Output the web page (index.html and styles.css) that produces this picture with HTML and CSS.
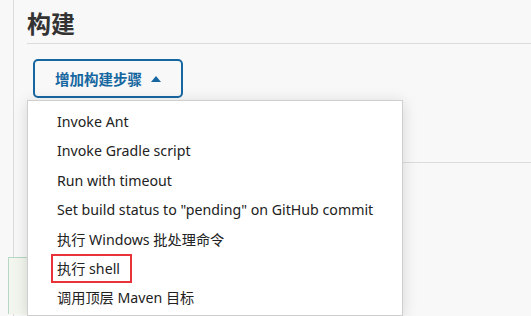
FILE: index.html
```html
<!DOCTYPE html>
<html lang="zh-CN">
<head>
    <meta charset="UTF-8">
    <meta name="viewport" content="width=device-width, initial-scale=1.0">
    <title>构建</title>
    <link rel="stylesheet" href="styles.css">
</head>
<body>
    <div class="layout">
        <div class="side-gap"></div>
        <div class="main">
            <h2 class="section-title">构建</h2>

            <div class="actions">
                <button class="add-step-btn">增加构建步骤 <span class="caret"></span></button>

                <ul class="step-menu">
                    <li>Invoke Ant</li>
                    <li>Invoke Gradle script</li>
                    <li>Run with timeout</li>
                    <li>Set build status to "pending" on GitHub commit</li>
                    <li>执行 Windows 批处理命令</li>
                    <li><span class="highlight">执行 shell</span></li>
                    <li>调用顶层 Maven 目标</li>
                </ul>
            </div>

            <div class="divider"></div>
            <div class="next-section"></div>
        </div>
    </div>
</body>
</html>
```

FILE: styles.css
```css
:root {
    --bg: #f8f8f8;
    --line: #dcdcdc;
    --text: #333;
    --blue: #1667a0;
    --red: #e8333b;
}

body {
    margin: 0;
    background-color: var(--bg);
    color: var(--text);
    font-family: 'Noto Sans', 'Noto Sans CJK SC', sans-serif;
    height: 316px;
    overflow: hidden;
}

.layout {
    display: flex;
    height: 316px;
}

.side-gap {
    width: 13px;
    flex-shrink: 0;
}

.main {
    flex: 1;
    border-left: 1px solid var(--line);
    padding-left: 13px;
}

.section-title {
    margin: 0;
    padding-top: 7px;
    height: 36px;
    line-height: 32px;
    font-size: 24px;
    font-weight: bold;
    font-family: 'Noto Sans CJK SC', sans-serif;
    color: var(--text);
    border-bottom: 1px solid var(--line);
}

.actions {
    position: relative;
    padding-top: 15px;
}

.add-step-btn {
    display: flex;
    align-items: center;
    gap: 9px;
    margin-left: 6px;
    width: 150px;
    height: 39px;
    padding: 0 0 0 20px;
    background: transparent;
    border: 2px solid var(--blue);
    border-radius: 5px;
    color: var(--blue);
    font-family: 'Noto Sans CJK SC', sans-serif;
    font-size: 14.5px;
    font-weight: bold;
    cursor: pointer;
}

.caret {
    width: 0;
    height: 0;
    border-left: 5px solid transparent;
    border-right: 5px solid transparent;
    border-bottom: 6px solid var(--blue);
}

.step-menu {
    position: absolute;
    top: 56px;
    left: 0;
    z-index: 2;
    width: 374px;
    height: 208px;
    margin: 0;
    padding: 6px 0 0 0;
    list-style: none;
    background-color: white;
    border: 1px solid #cfcfcf;
    box-shadow: 0 2px 14px rgba(0, 0, 0, 0.14);
    font-size: 14.2px;
    color: #222;
}

.step-menu li {
    height: 29.4px;
    line-height: 29.4px;
    padding-left: 29px;
    white-space: nowrap;
}

.highlight {
    display: inline-block;
    margin-left: -6px;
    padding: 0 10px 0 4px;
    line-height: 25px;
    border: 2px solid var(--red);
}

.divider {
    margin-top: 64px;
    border-top: 1px solid var(--line);
}

.next-section {
    position: relative;
    margin-top: 94px;
    margin-left: -19px;
    width: 60px;
    height: 56px;
    background-color: #f3f6ef;
    border: 1px solid #b7d8c4;
    border-bottom: none;
}
```
